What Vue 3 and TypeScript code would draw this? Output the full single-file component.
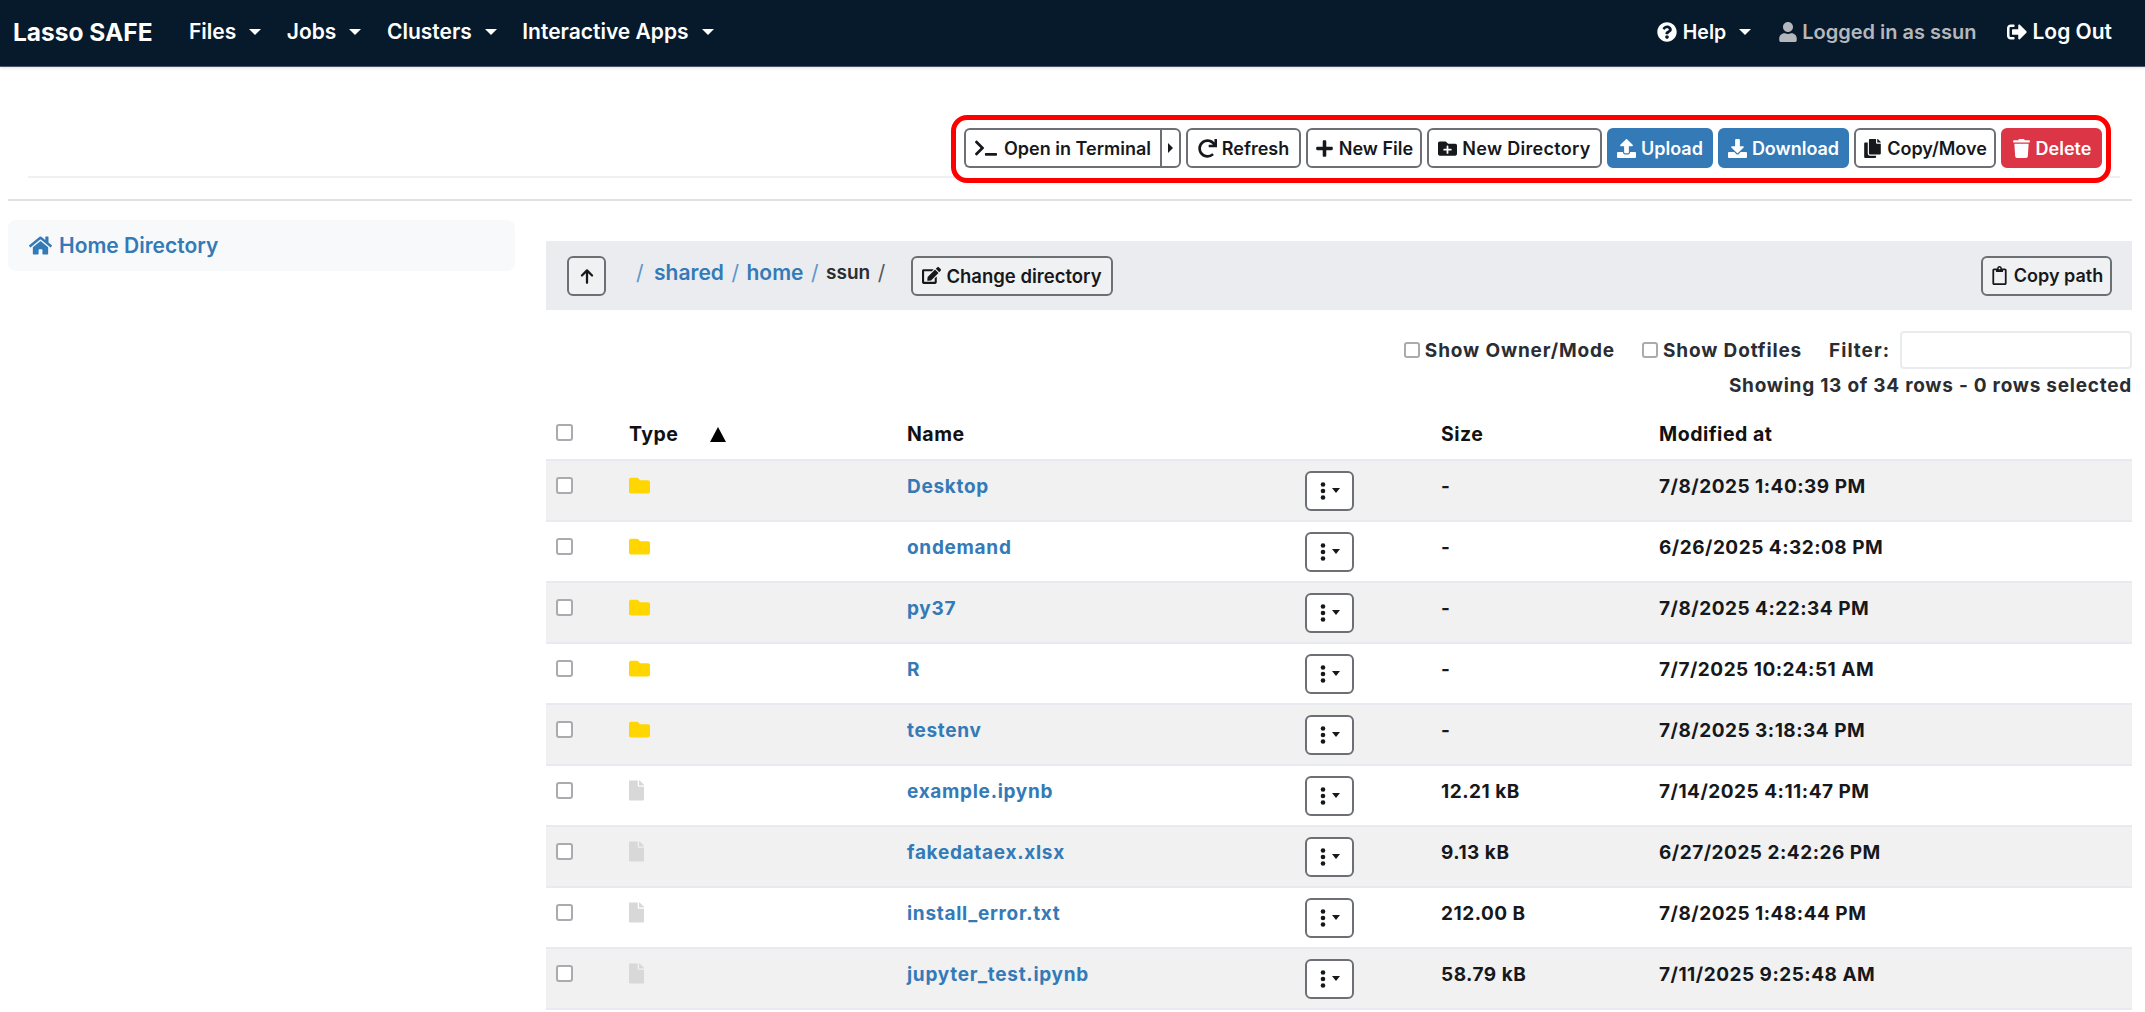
<script setup lang="ts">
interface Row { name: string; size: string; date: string; dir: boolean }
const rows: Row[] = [
  { name: 'Desktop', size: '-', date: '7/8/2025 1:40:39 PM', dir: true },
  { name: 'ondemand', size: '-', date: '6/26/2025 4:32:08 PM', dir: true },
  { name: 'py37', size: '-', date: '7/8/2025 4:22:34 PM', dir: true },
  { name: 'R', size: '-', date: '7/7/2025 10:24:51 AM', dir: true },
  { name: 'testenv', size: '-', date: '7/8/2025 3:18:34 PM', dir: true },
  { name: 'example.ipynb', size: '12.21 kB', date: '7/14/2025 4:11:47 PM', dir: false },
  { name: 'fakedataex.xlsx', size: '9.13 kB', date: '6/27/2025 2:42:26 PM', dir: false },
  { name: 'install_error.txt', size: '212.00 B', date: '7/8/2025 1:48:44 PM', dir: false },
  { name: 'jupyter_test.ipynb', size: '58.79 kB', date: '7/11/2025 9:25:48 AM', dir: false },
]
const menus = ['Files', 'Jobs', 'Clusters', 'Interactive Apps']
</script>

<template>
  <div class="page">
    <nav class="nav">
      <a class="brand">Lasso SAFE</a>
      <a v-for="m in menus" :key="m" class="nav-link">{{ m }}<i class="caret"></i></a>
      <span class="spacer"></span>
      <a class="nav-link right help">
        <svg class="ni" viewBox="0 0 512 512"><path d="M504 256c0 136.997-111.043 248-248 248S8 392.997 8 256C8 119.083 119.043 8 256 8s248 111.083 248 248zM262.655 90c-54.497 0-89.255 22.957-116.549 63.758-3.536 5.286-2.353 12.415 2.715 16.258l34.699 26.31c5.205 3.947 12.621 3.008 16.665-2.122 17.864-22.658 30.113-35.797 57.303-35.797 20.429 0 45.698 13.148 45.698 32.958 0 14.976-12.363 22.667-32.534 33.976C247.128 238.528 216 254.941 216 296v4c0 6.627 5.373 12 12 12h56c6.627 0 12-5.373 12-12v-1.333c0-28.462 83.186-29.647 83.186-106.667 0-58.002-60.165-102-116.531-102zM256 338c-25.365 0-46 20.635-46 46 0 25.364 20.635 46 46 46s46-20.636 46-46c0-25.365-20.635-46-46-46z"/></svg>
        Help<i class="caret"></i>
      </a>
      <a class="nav-link right muted">
        <svg class="ni" viewBox="0 0 448 512"><path d="M224 256c70.7 0 128-57.3 128-128S294.7 0 224 0 96 57.3 96 128s57.3 128 128 128zm89.6 32h-16.7c-22.2 10.2-46.9 16-72.9 16s-50.6-5.8-72.9-16h-16.7C60.2 288 0 348.2 0 422.4V464c0 26.5 21.5 48 48 48h352c26.5 0 48-21.5 48-48v-41.6c0-74.2-60.2-134.4-134.4-134.4z"/></svg>
        Logged in as ssun
      </a>
      <a class="nav-link last">
        <svg class="ni" viewBox="0 0 512 512"><path d="M497 273L329 441c-15 15-41 4.500-41-17v-96H152c-13.300 0-24-10.700-24-24v-96c0-13.300 10.700-24 24-24h136V88c0-21.300 25.900-32 41-17l168 168c9.300 9.400 9.300 24.600 0 34zM192 436v-40c0-6.600-5.400-12-12-12H96c-17.700 0-32-14.300-32-32V160c0-17.700 14.300-32 32-32h84c6.600 0 12-5.400 12-12V76c0-6.600-5.400-12-12-12H96c-53 0-96 43-96 96v192c0 53 43 96 96 96h84c6.600 0 12-5.400 12-12z"/></svg>
        Log Out
      </a>
    </nav>

    <div class="toolbar">
      <div class="callout">
        <div class="split">
          <button class="btn terminal">
            <svg class="bi wide" viewBox="0 0 640 512"><path d="M257.981 272.971L63.638 467.314c-9.373 9.373-24.569 9.373-33.941 0L7.029 444.647c-9.357-9.357-9.375-24.522-.04-33.901L161.011 256 6.99 101.255c-9.335-9.379-9.317-24.544.04-33.901l22.667-22.667c9.373-9.373 24.569-9.373 33.941 0L257.981 239.03c9.373 9.372 9.373 24.568 0 33.941zM640 456v-32c0-13.255-10.745-24-24-24H312c-13.255 0-24 10.745-24 24v32c0 13.255 10.745 24 24 24h304c13.255 0 24-10.745 24-24z"/></svg>
            Open in Terminal
          </button>
          <button class="btn more"><i class="right-caret"></i></button>
        </div>
        <button class="btn refresh">
          <svg class="bi" viewBox="0 0 512 512"><path d="M500.33 0h-47.41a12 12 0 0 0-12 12.57l4 82.76A247.42 247.42 0 0 0 256 8C119.34 8 7.9 119.53 8 256.19 8.1 393.07 119.1 504 256 504a247.1 247.1 0 0 0 166.18-63.91 12 12 0 0 0 .48-17.43l-34-34a12 12 0 0 0-16.38-.55A176 176 0 1 1 402.1 157.8l-101.53-4.87a12 12 0 0 0-12.57 12v47.41a12 12 0 0 0 12 12h200.33a12 12 0 0 0 12-12V12a12 12 0 0 0-12-12z"/></svg>
          Refresh
        </button>
        <button class="btn newfile">
          <svg class="bi" viewBox="0 0 448 512"><path d="M416 208H272V64c0-17.670-14.330-32-32-32h-32c-17.670 0-32 14.330-32 32v144H32c-17.670 0-32 14.330-32 32v32c0 17.670 14.330 32 32 32h144v144c0 17.670 14.330 32 32 32h32c17.670 0 32-14.330 32-32V304h144c17.670 0 32-14.330 32-32v-32c0-17.670-14.330-32-32-32z"/></svg>
          New File
        </button>
        <button class="btn newdir">
          <svg class="bi" viewBox="0 0 512 512"><path d="M464 128H272l-64-64H48C21.490 64 0 85.490 0 112v288c0 26.510 21.490 48 48 48h416c26.510 0 48-21.490 48-48V176c0-26.510-21.490-48-48-48zm-96 168c0 8.840-7.160 16-16 16h-72v72c0 8.840-7.160 16-16 16h-16c-8.840 0-16-7.160-16-16v-72h-72c-8.840 0-16-7.160-16-16v-16c0-8.840 7.160-16 16-16h72v-72c0-8.840 7.160-16 16-16h16c8.840 0 16 7.160 16 16v72h72c8.840 0 16 7.160 16 16v16z"/></svg>
          New Directory
        </button>
        <button class="btn blue upload">
          <svg class="bi" viewBox="0 0 512 512"><path d="M296 384h-80c-13.300 0-24-10.700-24-24V192h-87.700c-17.800 0-26.700-21.500-14.100-34.100L242.300 5.700c7.500-7.500 19.800-7.500 27.300 0l152.200 152.200c12.600 12.600 3.700 34.100-14.100 34.100H320v168c0 13.300-10.700 24-24 24zm216-8v112c0 13.300-10.700 24-24 24H24c-13.300 0-24-10.700-24-24V376c0-13.300 10.700-24 24-24h136v8c0 30.900 25.100 56 56 56h80c30.900 0 56-25.100 56-56v-8h136c13.300 0 24 10.700 24 24z"/></svg>
          Upload
        </button>
        <button class="btn blue download">
          <svg class="bi" viewBox="0 0 512 512"><path d="M216 0h80c13.300 0 24 10.700 24 24v168h87.700c17.800 0 26.700 21.500 14.100 34.100L269.700 378.300c-7.500 7.500-19.800 7.500-27.300 0L90.100 226.100c-12.600-12.600-3.700-34.100 14.100-34.100H192V24c0-13.300 10.700-24 24-24zm296 376v112c0 13.300-10.700 24-24 24H24c-13.300 0-24-10.700-24-24V376c0-13.300 10.700-24 24-24h146.700l49 49c20.100 20.100 52.500 20.100 72.600 0l49-49H488c13.300 0 24 10.700 24 24z"/></svg>
          Download
        </button>
        <button class="btn copymove">
          <svg class="bi" viewBox="0 0 448 512"><path d="M320 448v40c0 13.255-10.745 24-24 24H24c-13.255 0-24-10.745-24-24V120c0-13.255 10.745-24 24-24h72v296c0 30.879 25.121 56 56 56h168zm0-344V0H152c-13.255 0-24 10.745-24 24v368c0 13.255 10.745 24 24 24h272c13.255 0 24-10.745 24-24V128H344c-13.200 0-24-10.800-24-24zm120.971-31.029L375.029 7.029A24 24 0 0 0 358.059 0H352v96h96v-6.059a24 24 0 0 0-7.029-16.970z"/></svg>
          Copy/Move
        </button>
        <button class="btn red delete">
          <svg class="bi" viewBox="0 0 448 512"><path d="M432 32H312l-9.400-18.700A24 24 0 0 0 281.100 0H166.800a23.720 23.720 0 0 0-21.400 13.300L136 32H16A16 16 0 0 0 0 48v32a16 16 0 0 0 16 16h416a16 16 0 0 0 16-16V48a16 16 0 0 0-16-16zM53.200 467a48 48 0 0 0 47.900 45h245.800a48 48 0 0 0 47.900-45L416 128H32z"/></svg>
          Delete
        </button>
      </div>
    </div>
    <div class="rule"></div>

    <div class="content">
      <aside class="side">
        <a class="side-link">
          <svg class="home" viewBox="0 0 576 512"><path d="M280.370 148.260L96 300.110V464a16 16 0 0 0 16 16l112.060-.29a16 16 0 0 0 15.920-16V368a16 16 0 0 1 16-16h64a16 16 0 0 1 16 16v95.640a16 16 0 0 0 16 16.050L464 480a16 16 0 0 0 16-16V300L295.670 148.260a12.190 12.190 0 0 0-15.300 0zM571.600 251.470L488 182.560V44.050a12 12 0 0 0-12-12h-56a12 12 0 0 0-12 12v72.610L318.470 43a48 48 0 0 0-61 0L4.340 251.470a12 12 0 0 0-1.600 16.900l25.500 31A12 12 0 0 0 45.150 301l235.220-193.740a12.190 12.190 0 0 1 15.300 0L530.900 301a12 12 0 0 0 16.900-1.600l25.500-31a12 12 0 0 0-1.700-16.930z"/></svg>
          Home Directory
        </a>
      </aside>

      <main class="main">
        <div class="pathbar">
          <button class="btn up" aria-label="Up">
            <svg viewBox="0 0 16 16" class="arrow"><path d="M8 14V3M3.500 7.500 8 3l4.500 4.500" fill="none" stroke="currentColor" stroke-width="2" stroke-linecap="round" stroke-linejoin="round"/></svg>
          </button>
          <div class="crumbs">
            <span class="sep first">/</span><a>shared</a><span class="sep">/</span><a>home</a><span class="sep">/</span><b>ssun</b><span class="sep dark">/</span>
          </div>
          <button class="btn chdir">
            <svg class="bi" viewBox="0 0 576 512"><path d="M402.600 83.200l90.200 90.200c3.800 3.800 3.800 10 0 13.800L274.400 405.600l-92.800 10.300c-12.400 1.400-22.900-9.100-21.500-21.500l10.300-92.800L388.800 83.200c3.800-3.800 10-3.800 13.800 0zm162-22.900l-48.800-48.800c-15.200-15.200-39.900-15.200-55.200 0l-35.400 35.400c-3.800 3.800-3.800 10 0 13.800l90.200 90.200c3.800 3.800 10 3.800 13.800 0l35.400-35.400c15.200-15.300 15.200-40 0-55.200zM384 346.200V448H64V128h229.800c3.200 0 6.200-1.300 8.500-3.500l40-40c7.600-7.600 2.200-20.500-8.500-20.500H48C21.500 64 0 85.500 0 112v352c0 26.500 21.500 48 48 48h352c26.500 0 48-21.500 48-48V306.200c0-10.700-12.900-16-20.500-8.500l-40 40c-2.200 2.300-3.500 5.300-3.500 8.500z"/></svg>
            Change directory
          </button>
          <span class="spacer"></span>
          <button class="btn cpath">
            <svg class="bi" viewBox="0 0 384 512"><path d="M336 64h-80c0-35.300-28.700-64-64-64s-64 28.700-64 64H48C21.500 64 0 85.500 0 112v352c0 26.500 21.500 48 48 48h288c26.500 0 48-21.500 48-48V112c0-26.500-21.500-48-48-48zM192 40c13.300 0 24 10.700 24 24s-10.700 24-24 24-24-10.700-24-24 10.700-24 24-24zm144 418c0 3.300-2.700 6-6 6H54c-3.300 0-6-2.700-6-6V118c0-3.300 2.700-6 6-6h42v36c0 6.600 5.400 12 12 12h168c6.600 0 12-5.400 12-12v-36h42c3.300 0 6 2.700 6 6z"/></svg>
            Copy path
          </button>
        </div>

        <div class="filters">
          <label class="opt"><input type="checkbox" class="cb" />Show Owner/Mode</label>
          <label class="opt"><input type="checkbox" class="cb" />Show Dotfiles</label>
          <label class="opt filter-label">Filter:<input type="text" class="filter" /></label>
        </div>
        <div class="info">Showing 13 of 34 rows - 0 rows selected</div>

        <div class="thead grid">
          <span><input type="checkbox" class="cb big" /></span>
          <span class="type-h">Type<i class="sort"></i></span>
          <span>Name</span>
          <span></span>
          <span>Size</span>
          <span>Modified at</span>
        </div>
        <div v-for="r in rows" :key="r.name" class="row grid">
          <span><input type="checkbox" class="cb big" /></span>
          <span class="type-c">
            <svg v-if="r.dir" class="folder" viewBox="0 0 512 512"><path d="M464 128H272l-64-64H48C21.490 64 0 85.490 0 112v288c0 26.510 21.490 48 48 48h416c26.510 0 48-21.490 48-48V176c0-26.510-21.490-48-48-48z"/></svg>
            <svg v-else class="file" viewBox="0 0 384 512"><path d="M224 136V0H24C10.700 0 0 10.700 0 24v464c0 13.300 10.700 24 24 24h336c13.300 0 24-10.700 24-24V160H248c-13.200 0-24-10.800-24-24zm160-14.100v6.100H256V0h6.100c6.400 0 12.500 2.500 17 7l97.900 98c4.500 4.500 7 10.600 7 16.900z"/></svg>
          </span>
          <a class="fname">{{ r.name }}</a>
          <span>
            <button class="btn act" aria-label="Actions">
              <svg viewBox="0 0 6 20" class="dots"><circle cx="3" cy="3.500" r="2.300"/><circle cx="3" cy="10" r="2.300"/><circle cx="3" cy="16.500" r="2.300"/></svg>
              <i class="caret small"></i>
            </button>
          </span>
          <span>{{ r.size }}</span>
          <span>{{ r.date }}</span>
        </div>
        <div class="row grid tail"></div>
      </main>
    </div>
  </div>
</template>

<style>
html, body { margin: 0; background: #fff; overflow: hidden; }
</style>

<style scoped>
.page {
  width: 2145px;
  height: 1012px;
  overflow: hidden;
  font-family: "Inter", "Liberation Sans", sans-serif;
  font-weight: 600;
  font-size: 18px;
  letter-spacing: 0;
  color: #16181b;
  background: #fff;
}
.spacer { flex: 1; }

.nav {
  height: 67px;
  box-sizing: border-box;
  background: #071a2c;
  border-bottom: 1px solid #4a5462;
  box-shadow: 0 1px 3px rgba(0,0,0,.12);
  display: flex;
  align-items: center;
  color: #fff;
  padding-bottom: 3px;
  font-size: 21px;
}
.brand { margin-left: 13px; width: 176px; font-size: 24.5px; font-weight: 700; }
.nav-link { display: inline-flex; align-items: center; gap: 6px; margin-right: 25.500px; }
.nav-link.right { margin-right: 30px; }
.nav-link.help { font-size: 19.500px; margin-right: 27px; }
.nav-link.muted { color: #b4b8bd; font-size: 20px; gap: 4px; }
.nav-link.last { margin-right: 33px; }
.ni { width: 20px; height: 20px; fill: currentColor; }
.caret {
  display: inline-block;
  width: 0; height: 0;
  margin-left: 7px;
  border-left: 6px solid transparent;
  border-right: 6px solid transparent;
  border-top: 6px solid currentColor;
}
.caret.small { border-left-width: 4px; border-right-width: 4px; border-top-width: 5px; margin-left: 6px; }

.toolbar {
  height: 111px;
  box-sizing: border-box;
  margin: 0 25px 0 28px;
  padding-top: 48px;
  padding-right: 9px;
  border-bottom: 2px solid #eef0f3;
  display: flex;
  justify-content: flex-end;
  align-items: flex-start;
}
.callout {
  height: 68px;
  width: 1160px;
  box-sizing: border-box;
  border: 5px solid #ff0000;
  border-radius: 16px;
  padding: 8px 0 0 8px;
  background: #fff;
  display: flex;
  gap: 5px;
  align-items: flex-start;
  flex: none;
}
.btn {
  height: 40px;
  box-sizing: border-box;
  border: 2px solid #6c7075;
  border-radius: 6px;
  background: #fff;
  color: #16181b;
  font: inherit;
  font-size: 18px;
  letter-spacing: 0;
  padding: 0;
  display: inline-flex;
  align-items: center;
  justify-content: center;
  gap: 5px;
  white-space: nowrap;
  flex: none;
}
.bi { width: 19px; height: 19px; fill: currentColor; flex: none; }
.bi.wide { width: 22px; height: 18px; }
.split { display: flex; }
.terminal { width: 196px; border-right: 0; border-radius: 6px 0 0 6px; gap: 7px; }
.more { width: 21px; border-radius: 0 6px 6px 0; }
.right-caret {
  display: block; width: 0; height: 0;
  border-top: 5px solid transparent;
  border-bottom: 5px solid transparent;
  border-left: 5px solid #16181b;
}
.refresh { width: 115px; }
.newfile { width: 116px; }
.newdir { width: 175px; letter-spacing: 0.3px; }
.upload { width: 106px; }
.download { width: 131px; }
.copymove { width: 142px; }
.delete { width: 101px; }
.blue { background: #337ab7; border-color: #337ab7; color: #fff; }
.red { background: #dc3545; border-color: #dc3545; color: #fff; }

.rule {
  height: 2px;
  margin: 21px 13px 0 8px;
  background: #dfe1e4;
}

.content { display: flex; padding-left: 8px; padding-right: 13px; }
.side { width: 507px; margin-top: 19px; flex: none; }
.side-link {
  height: 51px;
  box-sizing: border-box;
  background: #f8f9fa;
  border-radius: 8px;
  padding-left: 21px;
  display: flex;
  align-items: center;
  gap: 7px;
  color: #337ab7;
  font-size: 21px;
}
.home { width: 23px; height: 21px; fill: #337ab7; }
.main { margin-left: 31px; width: 1586px; flex: none; margin-top: 40px; }

.pathbar {
  height: 69px;
  box-sizing: border-box;
  background: #eaecf0;
  display: flex;
  align-items: center;
  padding: 0 20px 0 21px;
}
.up { width: 39px; background: #f0f1f3; }
.arrow { width: 18px; height: 18px; color: #16181b; }
.crumbs { display: flex; align-items: center; margin-left: 30px; width: 275px; margin-bottom: 7px; font-size: 21px; color: #337ab7; gap: 7.500px; }
.crumbs b { color: #2a2d31; font-size: 19px; font-weight: 600; }
.sep { font-weight: 400; color: #5b95c9; }
.sep.first { margin-right: 3px; }
.sep.dark { color: #55595e; }
.chdir { width: 202px; background: #f0f1f3; font-size: 18.5px; }
.cpath { width: 131px; background: #f0f1f3; }

.filters {
  height: 38px;
  margin-top: 21px;
  display: flex;
  justify-content: flex-end;
  align-items: center;
}
.opt { display: inline-flex; align-items: center; gap: 5px; margin-left: 27px; font-size: 19px; font-weight: 700; letter-spacing: 0.85px; color: #2a2d31; }
.cb {
  appearance: none;
  -webkit-appearance: none;
  width: 16px; height: 16px;
  margin: 0;
  box-sizing: border-box;
  border: 2px solid #a9abae;
  border-radius: 3px;
  background: #fff;
  display: block;
}
.cb.big { width: 17px; height: 17px; margin-bottom: 3px; }
.filter-label { gap: 10px; letter-spacing: 1px; }
.filter {
  width: 232px; height: 38px;
  box-sizing: border-box;
  border: 2px solid #e9ecef;
  border-radius: 4px;
  background: #fff;
}
.info { text-align: right; height: 28px; line-height: 28px; margin-top: 3px; font-size: 19px; font-weight: 700; letter-spacing: 0.75px; color: #2a2d31; }

.grid {
  display: grid;
  grid-template-columns: 83px 278px 398px 136px 218px 1fr;
  align-items: center;
}
.grid > span:first-child { padding-left: 10px; }
.thead { height: 50px; margin-top: 9px; font-size: 19.5px; font-weight: 700; letter-spacing: 0.5px; color: #111; }
.type-h { display: flex; align-items: center; }
.sort {
  display: block; width: 0; height: 0;
  margin-left: 32px;
  border-left: 8.500px solid transparent;
  border-right: 8.500px solid transparent;
  border-bottom: 15px solid #000;
}
.row { height: 61px; box-sizing: border-box; border-top: 2px solid #e8eaef; color: #16181b; font-size: 19px; font-weight: 700; letter-spacing: 0.5px; padding-bottom: 8px; }
.row:nth-of-type(odd) { background: #f1f1f2; }
.fname { color: #337ab7; letter-spacing: 0.7px; }
.type-c { display: flex; margin-bottom: 2px; }
.folder { width: 21px; height: 21px; fill: #ffd600; }
.file { width: 15px; height: 21px; fill: #d8d8d8; }
.act { width: 49px; height: 40px; background: #fff; gap: 0; margin-top: 8px; }
.dots { width: 6px; height: 20px; fill: #16181b; }
</style>
